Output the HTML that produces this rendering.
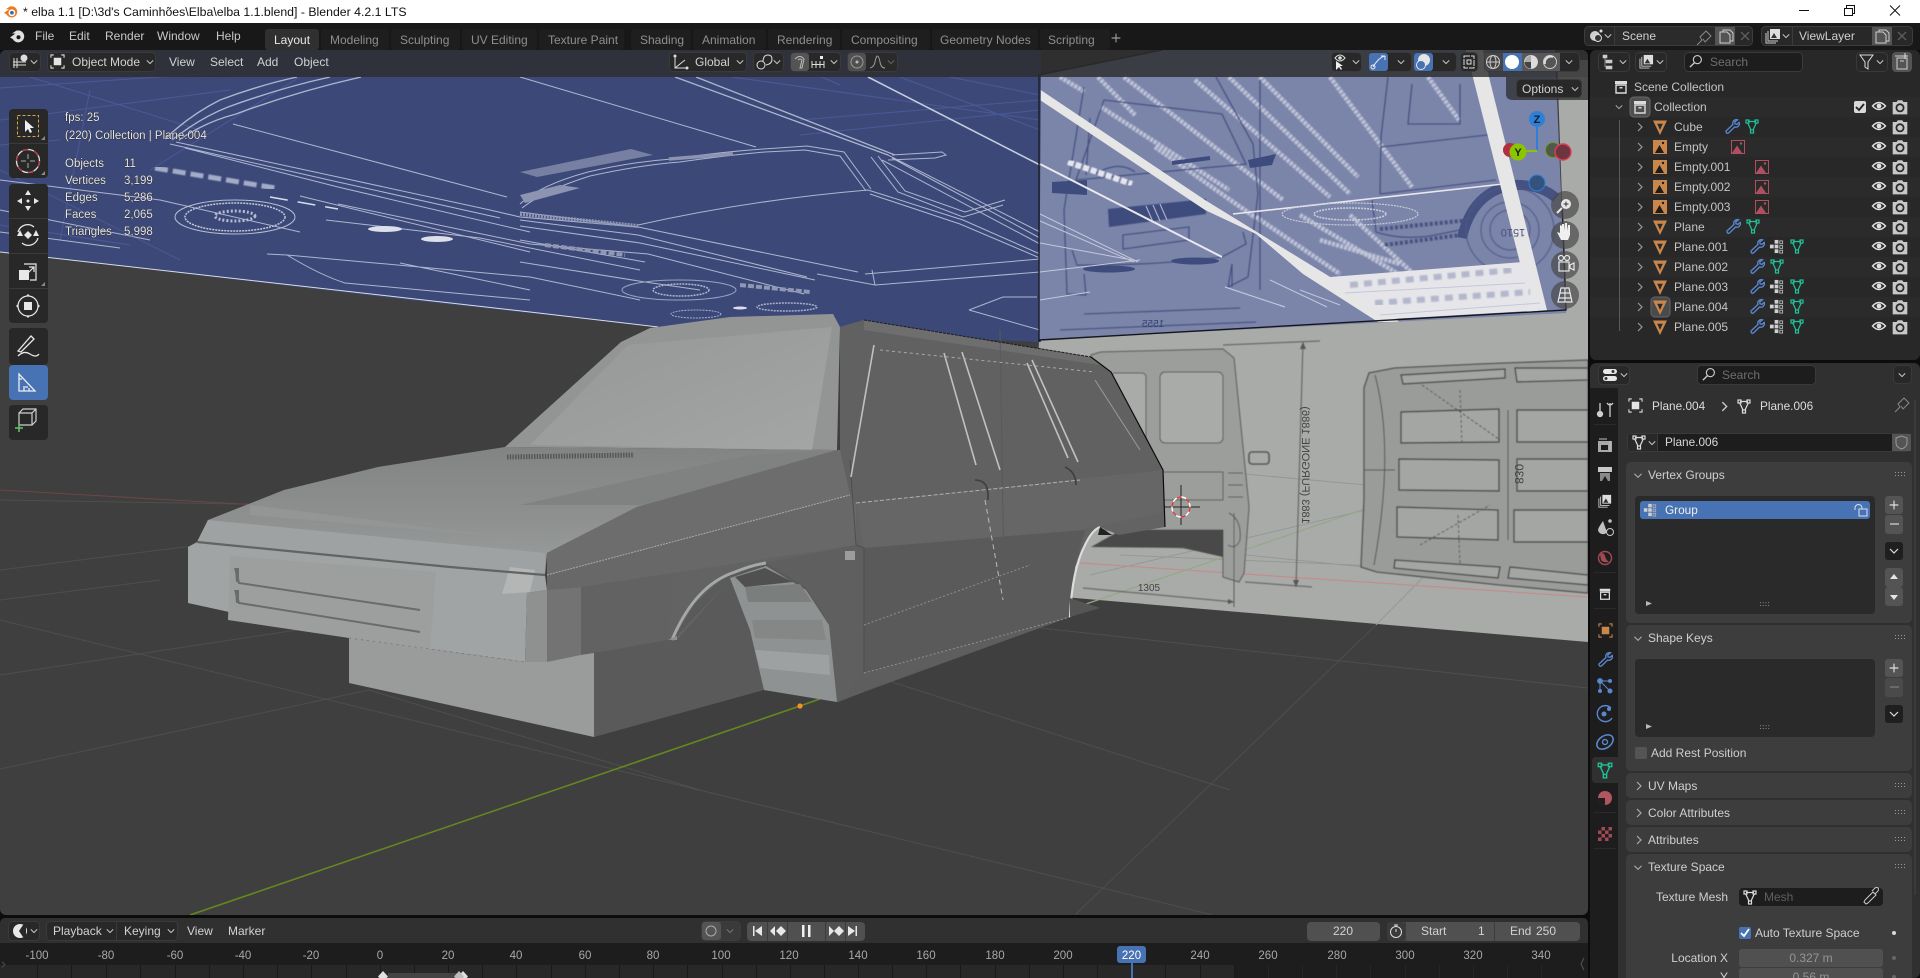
<!DOCTYPE html>
<html><head><meta charset="utf-8"><title>elba 1.1 - Blender</title>
<style>
html,body{margin:0;padding:0;background:#000;width:1920px;height:978px;overflow:hidden}
svg{display:block}
text{font-family:"Liberation Sans",sans-serif;font-size:12px;fill:#d0d0d0;white-space:pre}
.m{fill:#c8c8c8}.tb{fill:#8f8f8f}.h{fill:#d2d2d2}
.st{fill:#e8e8e8;font-size:11.5px;paint-order:stroke;stroke:#1a1a1a;stroke-width:.6px}
.ol{fill:#c4c4c4}.r{text-anchor:end}.c{text-anchor:middle}
.p{fill:#cfcfcf}.d{fill:#6e6e6e}.rl{fill:#a8a8a8;font-size:11.5px;text-anchor:middle}
.btn{fill:#282828;stroke:#3a3a3a}
</style></head><body>
<svg width="1920" height="978" viewBox="0 0 1920 978" xmlns="http://www.w3.org/2000/svg">
<defs>
<clipPath id="vp"><rect x="0" y="50" width="1588" height="865" rx="6"/></clipPath>
<clipPath id="lightclip"><path d="M1041 75L1162 50H1555L1566 313L1039 340Z"/></clipPath>
<filter id="b3" x="-5%" y="-5%" width="110%" height="110%"><feGaussianBlur stdDeviation=".4"/></filter>
<filter id="b6" x="-5%" y="-5%" width="110%" height="110%"><feGaussianBlur stdDeviation=".8"/></filter>
<symbol id="tri" viewBox="0 0 16 16"><g fill="none" stroke="currentColor" stroke-width="1.2"><path d="M4 3.5h8M3.5 4.5l3.6 7.7M12.5 4.5l-3.6 7.7"/><rect x="2" y="2" width="3" height="3"/><rect x="11" y="2" width="3" height="3"/><rect x="6.5" y="12" width="3" height="3"/></g></symbol>
<symbol id="wr" viewBox="0 0 16 16"><path d="M13.6 1.8a3.6 3.6 0 0 0-4.6 4.6L2.4 12.6a1.6 1.6 0 0 0 2.2 2.3L10.6 9a3.6 3.6 0 0 0 4.6-4.6L13 6.4 11 5.8l-.2-1.9z" fill="none" stroke="currentColor" stroke-width="1.3"/></symbol>
<symbol id="obj" viewBox="0 0 16 16"><path d="M1 1.500h14L8 16z" fill="#c9874c"/><path d="M5.200 4.800h5.600L8 11z" fill="#2a2a2a"/></symbol>
<symbol id="emp" viewBox="0 0 16 16"><rect x="1" y="1" width="14" height="14" fill="#c9874c"/><path d="M3 14L7.500 6l4.500 8z" fill="#1c1c1c"/><circle cx="11" cy="4" r="1.200" fill="#1c1c1c"/></symbol>
<symbol id="img" viewBox="0 0 16 16"><rect x="1.500" y="1.500" width="13" height="13" fill="#2a2a2a" stroke="#b0505e"/><path d="M2 14l5-7.500 5 7.500z" fill="#b0505e"/><circle cx="11" cy="4.500" r="1.200" fill="#b0505e"/></symbol>
<symbol id="vg" viewBox="0 0 16 16"><g fill="#d0d0d0"><rect x="1" y="6" width="4" height="4"/><rect x="6" y="1" width="4" height="4"/><rect x="6" y="6" width="4" height="4"/><rect x="6" y="11" width="4" height="4"/></g><g fill="none" stroke="#b0b0b0"><rect x="11.500" y="2" width="3" height="3"/><rect x="11.500" y="7" width="3" height="3"/><rect x="11.500" y="12" width="3" height="3"/></g></symbol>
<symbol id="eye" viewBox="0 0 16 16"><path d="M1.500 8Q8 1 14.500 8Q8 15 1.500 8z" fill="none" stroke="#e0e0e0" stroke-width="1.400"/><circle cx="8" cy="8" r="2.400" fill="#e0e0e0"/></symbol>
<symbol id="cam" viewBox="0 0 16 16"><path d="M1.500 3.500h3.500l1-1.500h4l1 1.500h3.500v11h-13z" fill="#c8c8c8"/><circle cx="8" cy="8.700" r="4" fill="#2a2a2a"/><circle cx="8" cy="8.700" r="2.400" fill="#c8c8c8"/></symbol>
<symbol id="chr" viewBox="0 0 10 10"><path d="M3 1l4 4-4 4" fill="none" stroke="currentColor" stroke-width="1.200"/></symbol>
<symbol id="chd" viewBox="0 0 10 10"><path d="M1 3l4 4 4-4" fill="none" stroke="currentColor" stroke-width="1.200"/></symbol>
<symbol id="col" viewBox="0 0 16 16"><rect x="2" y="2" width="12" height="3" fill="#dcdcdc"/><path d="M3 6h10v8H3z" fill="none" stroke="#dcdcdc" stroke-width="1.400"/><rect x="6.500" y="8" width="3" height="1.500" fill="#dcdcdc"/></symbol>
<symbol id="selo" viewBox="0 0 16 16"><path d="M1 4V1h3M12 1h3v3M15 12v3h-3M4 15H1v-3" fill="none" stroke="currentColor" stroke-width="1.100"/><rect x="4" y="4" width="8" height="8" fill="currentColor"/></symbol>
<symbol id="lay" viewBox="0 0 16 16"><path d="M1 5v10h10" fill="none" stroke="#ccc"/><path d="M3 3v10h10" fill="none" stroke="#ccc"/><rect x="5" y="1" width="10" height="10" fill="#ddd"/><path d="M6 10l3-5 3 5z" fill="#333"/></symbol>
<symbol id="plus" viewBox="0 0 16 16"><path d="M3 8h10M8 3v10" stroke="currentColor" stroke-width="1.300"/></symbol>
<symbol id="logo" viewBox="0 0 16 16"><path d="M1 9.500L6.500 5.500H3L7.500 2.500H10.500A6 6 0 1 1 3.800 11Z" fill="currentColor"/><circle cx="9.500" cy="9.300" r="3.600" fill="var(--h,#fff)"/><circle cx="9.500" cy="9.300" r="2" fill="var(--i,#333)"/></symbol>
<symbol id="srch" viewBox="0 0 16 16"><circle cx="10" cy="6" r="4.300" fill="none" stroke="currentColor" stroke-width="1.200"/><path d="M7 9.200L2 14" stroke="currentColor" stroke-width="1.400"/></symbol>
<symbol id="dots" viewBox="0 0 12 6"><g fill="#9a9a9a"><rect x="0" y="0" width="1" height="1"/><rect x="3" y="0" width="1" height="1"/><rect x="6" y="0" width="1" height="1"/><rect x="9" y="0" width="1" height="1"/><rect x="0" y="3" width="1" height="1"/><rect x="3" y="3" width="1" height="1"/><rect x="6" y="3" width="1" height="1"/><rect x="9" y="3" width="1" height="1"/></g></symbol>
<linearGradient id="hood" x1="0" y1="0" x2="0" y2="1"><stop offset="0" stop-color="#828484"/><stop offset=".55" stop-color="#8e9090"/><stop offset="1" stop-color="#9b9e9e"/></linearGradient>
<linearGradient id="ws" x1="0" y1="0" x2="1" y2="1"><stop offset="0" stop-color="#959797"/><stop offset="1" stop-color="#a4a6a6"/></linearGradient>
</defs>

<!-- base -->
<rect width="1920" height="978" fill="#0c0c0c"/>
<rect width="1920" height="23" fill="#fff"/>
<rect y="23" width="1920" height="27" fill="#181818"/>

<!-- VIEWPORT -->
<g clip-path="url(#vp)">
<rect y="50" width="1588" height="865" fill="#3f3f3f"/>
<g stroke="#4e4e4e" fill="none">
<path d="M0 675L297 630M0 620L1213 915M0 769L369 690M369 690L700 790M0 500L300 505M1376 625L1075 915M1040 628L1588 688M892 682L1230 790M0 570L200 545M0 600L160 580"/>
</g>
<path d="M190 915L800 706L1083 605" stroke="#64881f" stroke-width="1.600" fill="none"/>
<path d="M0 490L260 505" stroke="#6e4545" fill="none"/>

<!-- gray plane -->
<path d="M1039 340L1566 310L1557 60H1588V642L1075 598L1030 590Z" fill="#a9aba8"/>
<g stroke="#969896" fill="none"><path d="M1100 540L1588 590M1090 575L1450 490M1200 470L1588 505M1120 555L1588 575M1376 625L1455 545"/></g>
<path d="M1080 563L1588 597" stroke="#c48d8d" stroke-width="1.200"/>
<path d="M1083 605L1400 497" stroke="#95a885" stroke-width="1.200"/>
<!-- rear van -->
<g filter="url(#b3)">
<path d="M1091 355L1101 352L1223 349L1234 358L1249 507L1244 573L1239 582L1223 577L1223 530H1100Z" fill="#9c9e9c" stroke="#555"/>
<rect x="1160" y="372" width="63" height="71" rx="5" fill="#a9aba8" stroke="#555"/>
<rect x="1111" y="373" width="35" height="70" rx="4" fill="#a9aba8" stroke="#555"/>
<rect x="1249" y="452" width="20" height="12" rx="3" fill="#a9aba8" stroke="#555" stroke-width="1.600"/>
<path d="M1162 472H1223V500H1162M1228 473L1243 473M1228 485H1243M1228 497H1243" fill="none" stroke="#555"/>
<path d="M1091 547L1121 530H1223V557L1183 548Z" fill="#4a4a4a"/>
<path d="M1229 513Q1242 520 1240 540Q1236 550 1228 545" fill="none" stroke="#555"/>
<g fill="none" stroke="#5a5a5a"><path d="M1303 342L1296 587M1223 345L1320 341M1245 582L1312 587M1083 588L1234 602M1234 513V607"/></g>
<path d="M1303 342l-3 7h6zM1296 587l-3-7h6zM1234 602l-6-3v5z" fill="#555"/>
</g>
<text transform="translate(1302,465) rotate(-90) scale(1,-1)" text-anchor="middle" style="font-size:11px;fill:#444">1883 (FURGONE 1886)</text>
<text x="1149" y="591" text-anchor="middle" style="font-size:10px;fill:#444">1305</text>
<!-- underside -->
<g filter="url(#b3)">
<path d="M1364 388L1369 373L1395 368L1480 364L1588 360V593L1500 585L1377 572L1361 567L1364 500Z" fill="#9a9c9a" stroke="#505050" stroke-width="1.300"/>
<path d="M1375 375Q1395 450 1374 565M1364 470H1395" fill="none" stroke="#505050"/>
<g fill="#a4a6a4" stroke="#4c4c4c" stroke-width="1.400">
<path d="M1401 412L1499 409V442L1401 443Z"/><path d="M1399 459L1499 460V491L1399 490Z"/><path d="M1397 507L1498 510V540L1397 537Z"/>
<path d="M1517 410H1588V442H1517Z"/><path d="M1517 459H1588V491H1517Z"/><path d="M1514 510H1588V542H1514Z"/>
<path d="M1401 375L1505 369V378L1403 384Z"/><path d="M1515 368H1588V380L1517 382Z"/><path d="M1395 560L1500 567L1498 578L1394 568Z"/><path d="M1510 567L1588 575V585L1508 578Z"/>
</g>
<path d="M1508 410V540" stroke="#4c4c4c"/>
<g stroke="#555" stroke-dasharray="3 2" fill="none"><path d="M1460 390L1462 445M1458 515L1460 565M1422 385L1500 440M1420 545L1490 505"/></g>
</g>
<text transform="translate(1515,474) rotate(-90) scale(1,-1)" text-anchor="middle" style="font-size:12px;fill:#444">830</text>

<!-- 3D cursor -->
<path d="M1181 485V525M1162 507H1200" stroke="#222" stroke-width="1" fill="none"/>
<ellipse cx="1181" cy="507" rx="9" ry="10" fill="none" stroke="#fff" stroke-width="1.400"/>
<ellipse cx="1181" cy="507" rx="9" ry="10" fill="none" stroke="#d33" stroke-width="1.400" stroke-dasharray="5 5"/>

<!-- blue plane -->
<path d="M0 50H1041V342L659 327L409 300L0 252Z" fill="#3c4978"/>
<path d="M0 252L530 312L658 327" stroke="#d8dce8" stroke-width="1" fill="none"/>
<g stroke="#4a5996" fill="none" stroke-width="1"><path d="M0 88L230 72M732 77L1040 120M800 120L1040 100M900 77L1040 130M950 77L1040 95M0 120L230 90M300 77L150 170M0 170L180 260M90 90L60 240M760 50L840 85M800 135L1040 110M30 77L200 130M0 145L60 140M0 225L130 245"/></g>
<g stroke="#aeb5cf" fill="none" stroke-width="1">
<path d="M165 139Q190 115 220 100Q260 85 297 77M179 140Q205 122 236 114Q295 92 361 77M172 140Q200 118 228 107Q280 88 330 77" stroke-width="1.400"/>
<path d="M176 142L338 177L490 210L520 217L638 227M170 144L338 182L500 218M185 148L338 187L530 232"/>
<path d="M338 204L530 244L648 254L804 294M300 196L530 252"/>
<path d="M233 124L507 197M520 77L756 147"/>
<path d="M675 77L888 155M696 77L895 155" stroke-width="1.300"/>
<path d="M868 77L1040 165" stroke-width="1.600" stroke="#c6cbdc"/>
<path d="M520 204Q540 185 588 172Q630 162 672 159Q720 152 763 149L807 146L844 152L871 189M522 208Q545 190 590 176Q640 165 680 162Q730 155 765 152L805 150L840 156L866 191"/>
<path d="M638 225Q750 200 868 190L963 220L1040 254M870 194L960 224L1040 258"/>
<path d="M871 157L898 192L963 217L1003 205M878 156L905 191L965 212L1005 200M888 155L1040 232M892 158L1040 238M882 160L1040 244"/>
<path d="M892 155L942 152L946 155L935 158L888 160"/>
<path d="M520 212L638 227L858 272M520 220L638 235L807 277M520 226L640 243L815 280"/>
<path d="M865 274L1040 259M875 285L1040 272M817 274L875 285L872 270"/>
<path d="M520 240L645 262M520 262L645 282L700 290M0 180L160 200L300 232M0 210L150 240M0 232L120 248"/>
<path d="M326 220L480 238L640 270M267 254L287 255L530 277L640 300M287 255Q320 275 345 283L530 300M400 263L530 290"/>
<path d="M969 310L1003 297H1037M969 310L1040 330"/>
</g>
<path d="M270 197L338 209" stroke="#d8dce8" stroke-width="1.500" stroke-dasharray="18 10"/>
<ellipse cx="235" cy="217" rx="60" ry="17" fill="none" stroke="#b8bed4" stroke-width="1"/>
<ellipse cx="235" cy="217" rx="50" ry="14" fill="none" stroke="#c4c9da" stroke-width="1.500" stroke-dasharray="2 1"/>
<ellipse cx="235" cy="216" rx="20" ry="5" fill="none" stroke="#b4bad0" stroke-width="3" stroke-dasharray="2 2"/>
<ellipse cx="679" cy="290" rx="57" ry="10" fill="none" stroke="#9aa2c0"/>
<ellipse cx="681" cy="290" rx="28" ry="6" fill="none" stroke="#b0b7d0" stroke-width="1.500" stroke-dasharray="2 1"/>
<ellipse cx="787" cy="307" rx="30" ry="4" fill="none" stroke="#a8afca" stroke-width="1.500" stroke-dasharray="2 1"/>
<ellipse cx="696" cy="314" rx="25" ry="4" fill="none" stroke="#a8afca" stroke-dasharray="2 1"/>
<path d="M520 172L631 149L653 155L537 177Z" fill="#7780a2"/>
<path d="M669 159L733 154" stroke="#8c94b2" stroke-width="3.500"/>
<path d="M520 195L560 185L580 188L525 203Z" fill="#8c94b2"/>
<path d="M520 214L638 226" stroke="#8f97b5" stroke-width="4" stroke-dasharray="2 1"/>
<ellipse cx="385" cy="229" rx="17" ry="3" fill="#dde0ea"/><ellipse cx="437" cy="239" rx="16" ry="3" fill="#dde0ea"/>
<ellipse cx="740" cy="308" rx="7" ry="1.500" fill="#dde0ea"/>
<path d="M155 168L275 188" stroke="#a3abc6" stroke-width="5" stroke-dasharray="13 5" filter="url(#b3)"/>
<path d="M545 245L625 255M740 285L810 292" stroke="#8f97b5" stroke-width="4" stroke-dasharray="6 2"/>

<!-- light plane -->
<path d="M1041 75L1162 50H1555L1566 313L1039 340Z" fill="#7b84a9"/>
<g clip-path="url(#lightclip)">
<g filter="url(#b6)" stroke="#c3c8da" fill="none" stroke-width="4.500" stroke-dasharray="3 1.200">
<path d="M1060 77L1085 92M1098 77L1135 115M1124 77L1283 200M1195 80L1330 197M1229 77L1350 194M1260 77L1358 177M1330 77L1412 187M1428 77L1459 120M1101 107L1229 190M1155 147L1256 218M1256 217L1340 274M1300 215L1400 275M1350 215L1420 280M1320 240L1400 264"/>
</g>
<g filter="url(#b3)" fill="none" stroke="#3f4b7c" stroke-width="1.100">
<path d="M1216 77L1253 144L1258 194L1248 277L1228 287L1232 264M1084 87L1064 210L1067 294L1086 295L1084 274"/>
<path d="M1104 100L1222 114L1246 164L1076 180ZM1090 118L1086 175"/>
<path d="M1096 174Q1118 160 1135 172M1123 235L1189 227V240L1123 249ZM1072 250L1077 265Q1150 266 1222 257L1246 244L1243 232"/>
<path d="M1232 264V287M1260 80V290M1060 330L1256 322M1084 314L1240 308"/>
<path d="M1388 77L1381 137L1380 194M1412 84L1408 124H1460V84M1381 147L1496 134M1380 194L1496 180M1372 200L1376 232Q1400 240 1430 236L1460 230"/>
</g>
<path d="M1108 209L1206 199V214L1109 227Z" fill="#3e4b7d" filter="url(#b3)"/>
<path d="M1146 206L1153 222M1153 205L1160 221M1160 204L1167 220" stroke="#a8aec8" stroke-width="1.200"/>
<path d="M1052 182L1087 180V195L1052 193ZM1248 160L1276 154L1272 165L1250 168Z" fill="#3e4b7d"/>
<path d="M1172 163L1210 158" stroke="#3e4b7d" stroke-width="4"/>
<ellipse cx="1109" cy="269" rx="26" ry="3.500" fill="#3e4b7d"/><ellipse cx="1195" cy="261" rx="24" ry="3.500" fill="#3e4b7d"/>
<path d="M1462 238Q1472 192 1513 185Q1540 184 1556 198" fill="none" stroke="#3f4b7c" stroke-width="10" opacity=".9"/>
<g fill="none" stroke="#4d5888" filter="url(#b3)"><ellipse cx="1510" cy="230" rx="44" ry="43"/><ellipse cx="1510" cy="230" rx="29" ry="28"/><ellipse cx="1510" cy="230" rx="20" ry="20"/></g>
<path d="M1380 229L1470 220M1385 245L1460 235" stroke="#47527f" stroke-width="4" stroke-dasharray="3 2" filter="url(#b3)"/>
<path d="M1040 164L1222 257" stroke="#e8e8ee" stroke-width="2"/>
<path d="M1040 214L1138 262M1040 221L1134 262M1040 243L1132 260M1040 272L1140 260M1040 300L1090 292" stroke="#c3c8da" stroke-width="1" fill="none"/>
<path d="M966 50H981L1205 200L1327 275L1400 322L1378 322L1303 274L1256 234L1205 210L1040 100Z" fill="#e6e6e6"/>
<path d="M1466 50H1483L1489 77L1547 310L1527 312L1520 263Z" fill="#e6e6e6"/>
<path d="M1330 277L1523 262L1547 310L1391 319Z" fill="#e6e6ea"/>
<g stroke="#b3b7cb" stroke-width="6" stroke-dasharray="8 6" filter="url(#b6)"><path d="M1350 285L1512 270M1375 303L1530 292"/></g>
<path d="M1345 293L1525 283M1380 315L1540 303" stroke="#c4c8d6" stroke-width="1"/>
<path d="M1233 214L1503 184" stroke="#e8e8ee" stroke-width="1.600"/>
<ellipse cx="1350" cy="214" rx="68" ry="11" fill="none" stroke="#c8ccdc" stroke-width="1.200" stroke-dasharray="2 1"/>
<ellipse cx="1350" cy="214" rx="36" ry="6" fill="none" stroke="#c8ccdc" stroke-width="1.600" stroke-dasharray="2 1"/>
<path d="M1270 280L1327 307M1225 287L1285 307M1300 290L1340 305" stroke="#bfc4d8" stroke-width="1.200"/>
<path d="M1068 162L1132 184" stroke="#e4e6ee" stroke-width="6" stroke-dasharray="6 2" filter="url(#b3)"/>
</g>
<path d="M1039 342V75L1162 50" fill="none" stroke="#1d1d25" stroke-width="1.400"/>
<path d="M1039 340L1566 310L1562 200" fill="none" stroke="#15151a" stroke-width="1.400"/>
<text transform="translate(1153,327) scale(-1,1)" text-anchor="middle" style="font-size:10px;fill:#36426f">1555</text>
<text transform="translate(1513,221) scale(-1,-1) translate(0,-8)" text-anchor="middle" style="font-size:11px;fill:#47527f">1510</text>

<!-- CAR -->
<path d="M547 553L637 507L840 450V327L864 320L1091 357L1111 372L1163 470L1165 527L1119 535L1100 527L1091 533L1075 567L1070 617L861 692L838 702L764 690L677 640L581 655L547 662Z" fill="#636363"/>
<!-- box -->
<path d="M349 638V683L594 737V653L525 662Z" fill="#9a9c9c"/>
<path d="M594 653L668 640L677 640L730 580L750 630L764 690L594 737Z" fill="#5a5a5a"/>
<!-- windshield -->
<path d="M505 447L621 342L650 328L730 317L833 314L840 327L837 450Z" fill="#939595"/>
<path d="M530 445L628 345L832 327L812 450Z" fill="url(#ws)"/>
<!-- hood -->
<path d="M505 447L837 450L637 507L547 553L545 575L436 567L197 542L208 520L284 490L378 467Z" fill="url(#hood)"/>
<path d="M640 478L750 455L837 450L650 505L520 505Z" fill="#808282"/>
<path d="M208 520L545 553L545 575L197 542Z" fill="#9fa2a2"/>
<path d="M250 515L540 540L450 530L250 505Z" fill="#949696"/>
<!-- grille on hood -->
<path d="M507 457L634 455" stroke="#565656" stroke-width="5" stroke-dasharray="1.500 1.200"/>
<!-- front -->
<path d="M188 547L197 542L450 567L545 575L547 590L527 593L525 662L349 638L188 603Z" fill="#a1a4a4"/>
<path d="M230 556L436 572L430 650L228 620Z" fill="#9d9f9f"/>
<path d="M510 567L535 570L530 592L502 594Z" fill="#b4b6b6"/>
<path d="M527 593L547 590L547 662L525 662Z" fill="#8f9191"/>
<path d="M547 590L581 587L581 655L547 662Z" fill="#737373"/>
<path d="M581 587L673 573L668 640L581 655Z" fill="#626262"/>
<path d="M197 542L450 567L545 575" fill="none" stroke="#626464" stroke-width="2.200"/>
<path d="M235 568L239 583L420 610M235 590L239 603L420 632" fill="none" stroke="#6a6c6c" stroke-width="2"/>
<path d="M235 568l4 0v14l-3 0zM235 590l4 0v13l-3 0z" fill="#6a6c6c"/>
<path d="M349 638L525 662" stroke="#7a7a7a" stroke-dasharray="2 4"/>
<!-- fender -->
<path d="M547 553L637 507L837 450L850 450L850 495L547 575Z" fill="#6d6d6d"/>
<path d="M547 575L850 495L856 502L856 545L673 573L581 587L547 590Z" fill="#686868"/>
<path d="M547 575L850 495" stroke="#aaa" stroke-dasharray="2 1" fill="none"/>
<!-- arch -->
<path d="M673 640L695 603L730 572L766 563L806 587L829 623L837 702L764 690L730 580Z" fill="#5a5a5a"/>
<path d="M730 578L766 566L806 590L829 625L837 702L764 690L750 630Z" fill="#8f9292"/>
<path d="M735 577L765 568L793 582L745 587Z" fill="#505050"/>
<path d="M745 587L800 584L812 602L748 602Z" fill="#7c7e7e"/>
<path d="M752 620L822 620L826 640L755 638Z" fill="#858787"/>
<path d="M755 650L829 655L830 675L760 668Z" fill="#9ea1a1"/>
<path d="M672 640Q695 585 735 572Q752 565 766 563" fill="none" stroke="#a5a8a8" stroke-width="3"/>
<path d="M668 640h9v-4z" fill="#8d8f8f"/>
<!-- rear quarter -->
<path d="M766 563L856 545L864 548V692L838 702L829 623L806 587Z" fill="#5f5f5f"/>
<!-- side upper -->
<path d="M840 327L864 320L1091 357L1111 372L1163 470L856 503L850 495L840 450Z" fill="#616161"/>
<path d="M864 320L1091 357L1100 365L864 330Z" fill="#6e6e6e"/>
<path d="M856 503L1163 470L1165 512L1080 530L864 548Z" fill="#666"/>
<path d="M864 548L1085 530L1075 567L1070 617L864 692Z" fill="#5a5a5a"/>
<path d="M864 673L1070 617L861 692L838 702Z" fill="#5e5e5e"/>
<path d="M850 460L856 545L864 548V673" fill="none" stroke="#4e4e4e"/>
<path d="M1005 640L1000 330" stroke="#5a5a5a" fill="none"/>
<path d="M1091 357L1111 372L1163 470L1165 527" fill="none" stroke="#0c0c0c" stroke-width="1.200"/>
<path d="M864 320L1091 357" fill="none" stroke="#1d1d1d" stroke-dasharray="3 1" stroke-width="1"/>
<!-- pillars -->
<g fill="none" stroke="#bfc1c1" stroke-width="1.600">
<path d="M874 345L851 477M944 353L976 465M962 352L1000 470M1027 363L1068 458M1032 360L1078 462"/>
<path d="M1095 380L1140 450" stroke="#9a9a9a" stroke-width="1"/>
</g>
<path d="M880 350L1095 372" stroke="#a8a8a8" stroke-dasharray="3 3" fill="none"/>
<path d="M856 503L1080 480" stroke="#b0b0b0" stroke-dasharray="4 2" fill="none"/>
<path d="M975 480Q988 480 988 495V500M1065 467Q1076 472 1076 485" stroke="#3e3e3e" stroke-width="1.600" fill="none"/>
<path d="M985 500L1003 600" stroke="#bbb" stroke-dasharray="5 4" fill="none"/>
<rect x="845" y="551" width="10" height="9" fill="#9c9c9c"/>
<path d="M864 625L1030 565M864 673L1070 617" stroke="#8f8f8f" stroke-dasharray="2 2" fill="none"/>
<path d="M1070 617Q1072 570 1085 545Q1092 530 1100 527" fill="none" stroke="#dcdcdc" stroke-width="2.200"/>
<path d="M1100 527L1112 535L1098 535Z" fill="#222"/>
<path d="M1070 598L1100 608L1070 617Z" fill="#555"/>
<!-- origin -->
<circle cx="800" cy="706" r="2.600" fill="#f59320"/>

<!-- header overlay -->
<rect y="50" width="1588" height="27" fill="#2c2c2c" opacity=".8"/>
<path d="M1506 77H1588V100H1513Q1506 100 1506 94Z" fill="#2c2c2c" opacity=".75"/>

<!-- nav gizmo -->
<path d="M1537 119V150" stroke="#2f7fd4" stroke-width="2" fill="none"/>
<path d="M1537 151H1518" stroke="#8bc500" stroke-width="2"/>
<circle cx="1510" cy="150" r="7" fill="#b03040"/>
<circle cx="1553" cy="150" r="7.500" fill="#4f5a4a" stroke="#6f9a2a"/>
<circle cx="1563" cy="152" r="8" fill="#6e3540" stroke="#e03c50" stroke-width="1.400"/>
<circle cx="1518" cy="152" r="8.500" fill="#8bc500"/>
<text x="1518" y="156" class="c" style="font-size:11px;fill:#17220a;font-weight:bold">Y</text>
<circle cx="1537" cy="119" r="8" fill="#2f7fd4"/>
<text x="1537" y="123" class="c" style="font-size:11px;fill:#0c2035;font-weight:bold">Z</text>
<circle cx="1537" cy="183" r="8" fill="#33537e" stroke="#2f7fd4"/>
<g fill="#4a4a4a" fill-opacity=".7"><circle cx="1565" cy="205" r="14"/><circle cx="1565" cy="235" r="14"/><circle cx="1565" cy="265" r="14"/><circle cx="1565" cy="295" r="14"/></g>
<circle cx="1566" cy="204" r="5" fill="#e8e8e8"/><path d="M1563.500 204h5M1566 201.500v5" stroke="#333"/><path d="M1562 208l-5 5" stroke="#e8e8e8" stroke-width="2"/>
<path d="M1559 236l-2-4 3 1v-8l2 1 0 5 0-7 2 0 0 7 1-8 2 0 0 8 1-6 2 0 0 10-2 5h-7z" fill="#f0f0f0"/>
<g fill="none" stroke="#e8e8e8" stroke-width="1.200"><rect x="1559" y="262" width="10" height="9"/><circle cx="1561" cy="258" r="2.500"/><circle cx="1567" cy="258" r="2.500"/><path d="M1570 265l4-2v7l-4-2z"/></g>
<g fill="none" stroke="#e8e8e8" stroke-width="1.200"><path d="M1561 288h8l3 14h-14zM1565 288v14M1560 293h10M1559 298h12"/></g>
</g>

<!-- Tool shelf -->
<g>
<rect x="9" y="109" width="39" height="69" rx="4" fill="#282828"/>
<rect x="9" y="184" width="39" height="139" rx="4" fill="#282828"/>
<path d="M9 143.500H48M9 218.500H48M9 253.500H48M9 288.500H48" stroke="#3a3a3a"/>
<rect x="9" y="328" width="39" height="37" rx="4" fill="#282828"/>
<rect x="9" y="365" width="39" height="35" rx="4" fill="#4772b3"/>
<rect x="9" y="405" width="39" height="35" rx="4" fill="#282828"/>
<rect x="17.500" y="115.500" width="21" height="21" fill="none" stroke="#d4a94c" stroke-dasharray="3 2"/>
<path d="M25 120v12l3-3 2 4 2-1-2-4h4z" fill="#f0f0f0"/>
<path d="M45 140v-4l-4 4zM45 175v-4l-4 4zM45 286v-4l-4 4z" fill="#8a8a8a"/>
<circle cx="28" cy="161" r="11.500" fill="none" stroke="#e0e0e0" stroke-width="1.300"/>
<circle cx="28" cy="161" r="11.500" fill="none" stroke="#c03040" stroke-width="1.300" stroke-dasharray="6 6"/>
<path d="M28 154v5M28 163v5M21 161h5M30 161h5" stroke="#aaa"/>
<path d="M28 190l-3 5h6zM28 211l-3-5h6zM17 201l5-3v6zM39 201l-5-3v6z" fill="#e8e8e8"/><circle cx="28" cy="201" r="1.500" fill="#e8e8e8"/>
<path d="M18 232a10 10 0 0 1 16-5M38 238a10 10 0 0 1-16 5" fill="none" stroke="#e8e8e8" stroke-width="1.300"/><path d="M28 231l4 4-4 4-4-4z" fill="#e8e8e8"/><path d="M17 236l3-6 3 6zM39 236l-3-6-3 6z" fill="#e8e8e8"/>
<rect x="19" y="270" width="10" height="10" fill="#e8e8e8"/><path d="M24 264h12v16h-6M27 274l7-7M29 267h5v5" fill="none" stroke="#e8e8e8" stroke-width="1.200"/>
<circle cx="28" cy="306" r="10" fill="none" stroke="#e8e8e8" stroke-width="1.200"/><rect x="24" y="302" width="8" height="8" fill="#e8e8e8"/><path d="M28 294l-2 2h4zM28 318l-2-2h4zM16 306l2-2v4zM40 306l-2-2v4z" fill="#e8e8e8"/>
<path d="M18 351l13-15 3 3-13 13zM18 356q6-6 12-2t9 0" fill="none" stroke="#e8e8e8" stroke-width="1.300"/>
<path d="M19 391v-17l16 17zM23 387h5M19 379h3M24 391v-3M29 391v-3" fill="none" stroke="#eee" stroke-width="1.300"/>
<path d="M19 413h13v12H19zM19 413l4-4h13v12l-4 4M32 413l4-4" fill="none" stroke="#d0d0d0" stroke-width="1.200"/><path d="M15 428h8M19 424v8" stroke="#65c46a" stroke-width="1.500"/>
</g>

<!-- stats -->
<text x="65" y="121" class="st">fps: 25</text>
<text x="65" y="139" class="st">(220) Collection | Plane.004</text>
<text x="65" y="167" class="st">Objects</text><text x="124" y="167" class="st">11</text>
<text x="65" y="184" class="st">Vertices</text><text x="124" y="184" class="st">3,199</text>
<text x="65" y="201" class="st">Edges</text><text x="124" y="201" class="st">5,286</text>
<text x="65" y="218" class="st">Faces</text><text x="124" y="218" class="st">2,065</text>
<text x="65" y="235" class="st">Triangles</text><text x="124" y="235" class="st">5,998</text>

<!-- Title bar -->
<use href="#logo" x="3" y="4" width="15" height="15" style="color:#ed7a1c;--h:#fff;--i:#2a6fb8"/>
<text x="23" y="16" style="font-size:12.300px;fill:#111">* elba 1.1 [D:\3d's Caminhões\Elba\elba 1.1.blend] - Blender 4.2.1 LTS</text>
<path d="M1799 10.500H1809" stroke="#111"/>
<path d="M1844.500 8.500H1852.500V15.500H1844.500ZM1846.500 8.500V5.500H1854.500V13.500H1852.500" fill="none" stroke="#111"/>
<path d="M1890 5.500L1900 15.500M1900 5.500L1890 15.500" stroke="#111"/>

<!-- Top bar -->
<use href="#logo" x="9" y="28" width="16" height="16" style="color:#e0e0e0;--h:#e0e0e0;--i:#181818"/>
<text x="35" y="40" class="m">File</text><text x="69" y="40" class="m">Edit</text><text x="105" y="40" class="m">Render</text><text x="157" y="40" class="m">Window</text><text x="216" y="40" class="m">Help</text>
<g fill="#1e1e1e"><rect x="321" y="29" width="68" height="21" rx="3"/><rect x="391" y="29" width="69" height="21" rx="3"/><rect x="462" y="29" width="75" height="21" rx="3"/><rect x="539" y="29" width="85" height="21" rx="3"/><rect x="631" y="29" width="60" height="21" rx="3"/><rect x="693" y="29" width="73" height="21" rx="3"/><rect x="768" y="29" width="72" height="21" rx="3"/><rect x="842" y="29" width="88" height="21" rx="3"/><rect x="932" y="29" width="106" height="21" rx="3"/><rect x="1040" y="29" width="70" height="21" rx="3"/></g>
<rect x="265" y="29" width="54" height="21" rx="3" fill="#303030"/>
<text x="274" y="44" style="fill:#e6e6e6">Layout</text>
<text x="330" y="44" class="tb">Modeling</text><text x="400" y="44" class="tb">Sculpting</text><text x="471" y="44" class="tb">UV Editing</text><text x="548" y="44" class="tb">Texture Paint</text><text x="640" y="44" class="tb">Shading</text><text x="702" y="44" class="tb">Animation</text><text x="777" y="44" class="tb">Rendering</text><text x="851" y="44" class="tb">Compositing</text><text x="940" y="44" class="tb">Geometry Nodes</text><text x="1048" y="44" class="tb">Scripting</text>
<use href="#plus" x="1109" y="31" width="14" height="14" style="color:#999"/>

<!-- Scene / viewlayer -->
<rect x="1584.500" y="26.500" width="168" height="19" rx="4" fill="#282828" stroke="#3c3c3c"/>
<rect x="1615" y="27" width="100" height="18" fill="#2b2b2b"/><path d="M1614.500 27V45" stroke="#3c3c3c"/>
<rect x="1715" y="27" width="20" height="18" fill="#545454"/>
<circle cx="1595" cy="36" r="5" fill="#cfcfcf"/><circle cx="1598" cy="38" r="3.500" fill="#333" stroke="#ddd"/><circle cx="1601" cy="31" r="1.500" fill="#ddd"/>
<use href="#chd" x="1604" y="32" width="8" height="8" style="color:#ccc"/>
<text x="1622" y="40">Scene</text>
<path d="M1697 45l5-5-2-3 6-6 5 5-6 6-2-3" fill="none" stroke="#888"/>
<path d="M1720 32h7l3 3v8h-10zM1723 32v-2h7l3 3v8h-3" fill="none" stroke="#ccc"/>
<path d="M1741 32l8 8M1749 32l-8 8" stroke="#5e5e5e" stroke-width="1.300"/>
<rect x="1761.500" y="26.500" width="151" height="19" rx="4" fill="#282828" stroke="#3c3c3c"/>
<path d="M1792.500 27V45" stroke="#3c3c3c"/>
<rect x="1872" y="27" width="20" height="18" fill="#545454"/>
<use href="#lay" x="1765" y="28" width="16" height="16"/>
<use href="#chd" x="1782" y="32" width="8" height="8" style="color:#ccc"/>
<text x="1799" y="40">ViewLayer</text>
<path d="M1876 32h7l3 3v8h-10zM1879 32v-2h7l3 3v8h-3" fill="none" stroke="#ccc"/>
<path d="M1898 32l8 8M1906 32l-8 8" stroke="#5e5e5e" stroke-width="1.300"/>

<!-- Viewport header buttons -->
<rect x="9.500" y="52.500" width="31" height="19" rx="4" class="btn"/>
<path d="M14 68V58M17 58v10M13 62h13M13 65h13" stroke="#ddd" fill="none"/><circle cx="24" cy="58" r="3.500" fill="#ddd"/>
<use href="#chd" x="30" y="58" width="8" height="8" style="color:#ccc"/>
<rect x="47.500" y="52.500" width="108" height="19" rx="4" class="btn"/>
<use href="#selo" x="50" y="54" width="15" height="15" style="color:#e4e4e4"/>
<text x="72" y="66" class="h">Object Mode</text>
<use href="#chd" x="146" y="58" width="8" height="8" style="color:#ccc"/>
<text x="169" y="66" class="h">View</text><text x="210" y="66" class="h">Select</text><text x="257" y="66" class="h">Add</text><text x="294" y="66" class="h">Object</text>
<rect x="669.500" y="52.500" width="77" height="19" rx="4" class="btn"/>
<path d="M675 56v12h12M675 68l10-8" fill="none" stroke="#ddd"/><circle cx="675" cy="56" r="1.500" fill="#ddd"/><circle cx="687" cy="68" r="1.500" fill="#ddd"/>
<text x="695" y="66" class="h">Global</text><use href="#chd" x="736" y="58" width="8" height="8" style="color:#ccc"/>
<rect x="753.500" y="52.500" width="30" height="19" rx="4" class="btn"/>
<circle cx="761" cy="65" r="4" fill="none" stroke="#ddd"/><path d="M763 62q0-7 5-7 4 0 4 4 0 5-6 6" fill="none" stroke="#ddd"/>
<use href="#chd" x="773" y="58" width="8" height="8" style="color:#ccc"/>
<rect x="790.500" y="52.500" width="50" height="19" rx="4" class="btn"/><rect x="791" y="53" width="18" height="18" rx="3" fill="#545454"/>
<path d="M795 59q5-5 9 0l-2 9h-2l2-8q-2-2-4 0" fill="none" stroke="#bbb"/>
<path d="M812 61v7M816 61v7M820 61v7M824 61v7M812 64.500h12" stroke="#ddd"/><rect x="820" y="56" width="3" height="3" fill="#eee"/>
<use href="#chd" x="830" y="58" width="8" height="8" style="color:#ccc"/>
<rect x="847.500" y="52.500" width="50" height="19" rx="4" fill="#2a2a2a" stroke="#3a3a3a"/><rect x="848" y="53" width="18" height="18" rx="3" fill="#505050"/>
<circle cx="857" cy="62" r="6" fill="none" stroke="#999"/><circle cx="857" cy="62" r="1.500" fill="#bbb"/>
<path d="M870 68q4-1 5-6t2-6q2 0 3 6t5 6" fill="none" stroke="#9a9a9a"/>
<use href="#chd" x="887" y="58" width="8" height="8" style="color:#666"/>
<!-- right -->
<rect x="1331.500" y="52.500" width="30" height="19" rx="4" class="btn"/>
<path d="M1335 58q5-6 10 0q-5 6-10 0z" fill="none" stroke="#ddd"/><circle cx="1340" cy="58" r="1.800" fill="#ddd"/><path d="M1336 61v9l3-3 2 3 1-1-2-3h3z" fill="#eee"/>
<use href="#chd" x="1352" y="58" width="8" height="8" style="color:#ccc"/>
<rect x="1369.500" y="52.500" width="42" height="19" rx="4" class="btn"/><rect x="1369" y="53" width="19" height="18" rx="3" fill="#4772b3"/>
<path d="M1373 67q6-10 12-11M1385 56h-4M1385 56v4" fill="none" stroke="#eee"/><circle cx="1373" cy="67" r="2" fill="none" stroke="#eee"/>
<use href="#chd" x="1397" y="58" width="8" height="8" style="color:#ccc"/>
<rect x="1414.500" y="52.500" width="42" height="19" rx="4" class="btn"/><rect x="1414" y="53" width="19" height="18" rx="3" fill="#4772b3"/>
<circle cx="1424" cy="60" r="6" fill="#e6e6e6"/><circle cx="1421" cy="65" r="4.500" fill="#4772b3" stroke="#e6e6e6"/>
<use href="#chd" x="1442" y="58" width="8" height="8" style="color:#ccc"/>
<rect x="1460.500" y="52.500" width="17" height="19" rx="4" class="btn"/>
<rect x="1464" y="56" width="10" height="12" fill="none" stroke="#ddd" stroke-dasharray="6 1"/><rect x="1467" y="60" width="4" height="4" fill="none" stroke="#ddd"/>
<rect x="1484.500" y="52.500" width="95" height="19" rx="4" class="btn"/>
<rect x="1485" y="53" width="18" height="18" fill="#454545"/><rect x="1503" y="53" width="19" height="18" fill="#4772b3"/><rect x="1522" y="53" width="19" height="18" fill="#585858"/><rect x="1541" y="53" width="19" height="18" fill="#585858"/>
<circle cx="1493" cy="62" r="6.500" fill="none" stroke="#ccc"/><ellipse cx="1493" cy="62" rx="3" ry="6.500" fill="none" stroke="#ccc"/><path d="M1486.500 62h13" stroke="#ccc"/>
<circle cx="1512" cy="62" r="7" fill="#fff"/>
<circle cx="1531" cy="62" r="6.500" fill="#aaa" stroke="#ccc"/><path d="M1531 55.500v13a6.500 6.500 0 0 0 0-13z" fill="#ddd"/><path d="M1524.500 62a6.500 6.500 0 0 0 6.500 6.500v-6.500z" fill="#444"/>
<circle cx="1550" cy="62" r="6.500" fill="#555" stroke="#ccc"/><path d="M1545 64a6 6 0 0 1 8-7" fill="none" stroke="#ddd" stroke-width="2"/>
<use href="#chd" x="1565" y="58" width="8" height="8" style="color:#ccc"/>
<rect x="1516.500" y="79.500" width="65" height="18" rx="4" fill="#282828" stroke="#3a3a3a"/>
<text x="1522" y="93" class="h">Options</text><use href="#chd" x="1571" y="85" width="8" height="8" style="color:#ccc"/>

<!-- OUTLINER -->
<rect x="1590" y="50" width="330" height="310" rx="6" fill="#282828"/>
<g fill="#2b2b2b"><rect x="1590" y="97" width="330" height="20"/><rect x="1590" y="137" width="330" height="20"/><rect x="1590" y="177" width="330" height="20"/><rect x="1590" y="217" width="330" height="20"/><rect x="1590" y="257" width="330" height="20"/><rect x="1590" y="297" width="330" height="20"/></g>
<rect x="1598.500" y="52.500" width="31" height="19" rx="4" class="btn"/>
<path d="M1603 55h4v3h-4zM1606 60h6v3h-6zM1606 66h6v3h-6zM1605 58v9" fill="#ccc" stroke="#ccc" stroke-width=".6"/>
<use href="#chd" x="1619" y="58" width="8" height="8" style="color:#ccc"/>
<rect x="1635.500" y="52.500" width="31" height="19" rx="4" class="btn"/>
<use href="#lay" x="1639" y="54" width="15" height="15"/><use href="#chd" x="1656" y="58" width="8" height="8" style="color:#ccc"/>
<rect x="1684.500" y="52.500" width="118" height="19" rx="4" fill="#1d1d1d" stroke="#3a3a3a"/>
<use href="#srch" x="1688" y="54" width="15" height="15" style="color:#ccc"/>
<text x="1710" y="66" class="d">Search</text>
<rect x="1856.500" y="52.500" width="31" height="19" rx="4" class="btn"/>
<path d="M1860 55h13l-5 7v7l-3-2v-5z" fill="none" stroke="#ddd"/><use href="#chd" x="1876" y="58" width="8" height="8" style="color:#ccc"/>
<rect x="1892" y="52" width="20" height="20" rx="4" fill="#545454"/>
<path d="M1897 58h10v11h-10zM1895 56h8M1900 61h4" fill="none" stroke="#ccc"/><path d="M1905 53v6M1902 56h6" stroke="#ddd"/>

<use href="#col" x="1613" y="79" width="16" height="16"/>
<text x="1634" y="91" class="ol">Scene Collection</text>
<rect x="1630" y="97" width="20" height="20" rx="4" fill="#4f4f4f" stroke="#6a6a6a"/>
<use href="#col" x="1632" y="99" width="16" height="16"/>
<use href="#chd" x="1614" y="103" width="10" height="8" style="color:#aaa"/>
<text x="1654" y="111" class="ol">Collection</text>
<rect x="1854" y="101" width="12" height="12" rx="2" fill="#d8d8d8"/><path d="M1856 107l3 3 5-6" fill="none" stroke="#222" stroke-width="1.800"/>
<path d="M1619.500 120V331" stroke="#5a5a5a"/>

<g style="color:#9a9a9a">
<use href="#chr" x="1635" y="122" width="10" height="10"/><use href="#chr" x="1635" y="142" width="10" height="10"/><use href="#chr" x="1635" y="162" width="10" height="10"/><use href="#chr" x="1635" y="182" width="10" height="10"/><use href="#chr" x="1635" y="202" width="10" height="10"/><use href="#chr" x="1635" y="222" width="10" height="10"/><use href="#chr" x="1635" y="242" width="10" height="10"/><use href="#chr" x="1635" y="262" width="10" height="10"/><use href="#chr" x="1635" y="282" width="10" height="10"/><use href="#chr" x="1635" y="302" width="10" height="10"/><use href="#chr" x="1635" y="322" width="10" height="10"/>
</g>
<rect x="1651" y="297" width="19" height="20" rx="4" fill="#4a4a4a" stroke="#666"/>
<use href="#obj" x="1652" y="119" width="16" height="16"/>
<use href="#emp" x="1652" y="139" width="16" height="16"/><use href="#emp" x="1652" y="159" width="16" height="16"/><use href="#emp" x="1652" y="179" width="16" height="16"/><use href="#emp" x="1652" y="199" width="16" height="16"/>
<use href="#obj" x="1652" y="219" width="16" height="16"/><use href="#obj" x="1652" y="239" width="16" height="16"/><use href="#obj" x="1652" y="259" width="16" height="16"/><use href="#obj" x="1652" y="279" width="16" height="16"/><use href="#obj" x="1652" y="299" width="16" height="16"/><use href="#obj" x="1652" y="319" width="16" height="16"/>
<g class="ol"><text x="1674" y="131" class="ol">Cube</text><text x="1674" y="151" class="ol">Empty</text><text x="1674" y="171" class="ol">Empty.001</text><text x="1674" y="191" class="ol">Empty.002</text><text x="1674" y="211" class="ol">Empty.003</text><text x="1674" y="231" class="ol">Plane</text><text x="1674" y="251" class="ol">Plane.001</text><text x="1674" y="271" class="ol">Plane.002</text><text x="1674" y="291" class="ol">Plane.003</text><text x="1674" y="311" class="ol">Plane.004</text><text x="1674" y="331" class="ol">Plane.005</text></g>
<g style="color:#5a87d0">
<use href="#wr" x="1724" y="118" width="16" height="16"/><use href="#wr" x="1725" y="218" width="16" height="16"/><use href="#wr" x="1749" y="238" width="16" height="16"/><use href="#wr" x="1749" y="258" width="16" height="16"/><use href="#wr" x="1749" y="278" width="16" height="16"/><use href="#wr" x="1749" y="298" width="16" height="16"/><use href="#wr" x="1749" y="318" width="16" height="16"/>
</g>
<g style="color:#1fc39a">
<use href="#tri" x="1744" y="118" width="16" height="16"/><use href="#tri" x="1745" y="218" width="16" height="16"/><use href="#tri" x="1789" y="238" width="16" height="16"/><use href="#tri" x="1769" y="258" width="16" height="16"/><use href="#tri" x="1789" y="278" width="16" height="16"/><use href="#tri" x="1789" y="298" width="16" height="16"/><use href="#tri" x="1789" y="318" width="16" height="16"/>
</g>
<use href="#vg" x="1769" y="239" width="15" height="15"/><use href="#vg" x="1769" y="279" width="15" height="15"/><use href="#vg" x="1769" y="299" width="15" height="15"/><use href="#vg" x="1769" y="319" width="15" height="15"/>
<use href="#img" x="1730" y="139" width="16" height="16"/><use href="#img" x="1754" y="159" width="16" height="16"/><use href="#img" x="1754" y="179" width="16" height="16"/><use href="#img" x="1754" y="199" width="16" height="16"/>
<g>
<use href="#eye" x="1871" y="98" width="16" height="16"/><use href="#cam" x="1891" y="98" width="18" height="18"/>
<use href="#eye" x="1871" y="118" width="16" height="16"/><use href="#cam" x="1891" y="118" width="18" height="18"/>
<use href="#eye" x="1871" y="138" width="16" height="16"/><use href="#cam" x="1891" y="138" width="18" height="18"/>
<use href="#eye" x="1871" y="158" width="16" height="16"/><use href="#cam" x="1891" y="158" width="18" height="18"/>
<use href="#eye" x="1871" y="178" width="16" height="16"/><use href="#cam" x="1891" y="178" width="18" height="18"/>
<use href="#eye" x="1871" y="198" width="16" height="16"/><use href="#cam" x="1891" y="198" width="18" height="18"/>
<use href="#eye" x="1871" y="218" width="16" height="16"/><use href="#cam" x="1891" y="218" width="18" height="18"/>
<use href="#eye" x="1871" y="238" width="16" height="16"/><use href="#cam" x="1891" y="238" width="18" height="18"/>
<use href="#eye" x="1871" y="258" width="16" height="16"/><use href="#cam" x="1891" y="258" width="18" height="18"/>
<use href="#eye" x="1871" y="278" width="16" height="16"/><use href="#cam" x="1891" y="278" width="18" height="18"/>
<use href="#eye" x="1871" y="298" width="16" height="16"/><use href="#cam" x="1891" y="298" width="18" height="18"/>
<use href="#eye" x="1871" y="318" width="16" height="16"/><use href="#cam" x="1891" y="318" width="18" height="18"/>
</g>

<!-- PROPERTIES -->
<rect x="1590" y="363" width="330" height="615" rx="6" fill="#303030"/>
<rect x="1590" y="388" width="28" height="590" fill="#1d1d1d"/>
<rect x="1598.500" y="365.500" width="31" height="19" rx="4" class="btn"/>
<rect x="1603" y="369" width="14" height="5" rx="2.500" fill="#e8e8e8"/><rect x="1603" y="376" width="14" height="5" rx="2.500" fill="#e8e8e8"/><circle cx="1613" cy="371.500" r="1.500" fill="#333"/><circle cx="1606" cy="378.500" r="1.500" fill="#333"/>
<use href="#chd" x="1620" y="371" width="8" height="8" style="color:#ccc"/>
<rect x="1697.500" y="365.500" width="118" height="19" rx="4" fill="#1d1d1d" stroke="#3a3a3a"/>
<use href="#srch" x="1701" y="367" width="15" height="15" style="color:#ccc"/>
<text x="1722" y="379" class="d">Search</text>
<rect x="1893.500" y="365.500" width="18" height="18" rx="4" fill="#282828" stroke="#3a3a3a"/>
<use href="#chd" x="1898" y="371" width="8" height="8" style="color:#ccc"/>

<!-- tabs -->
<g fill="none" stroke="#d0d0d0" stroke-width="1.300">
<path d="M1600 403v8M1610 403v6M1607 403q3 4 6 0M1610 409v8"/><circle cx="1600" cy="414" r="2.500" fill="#d0d0d0"/>
</g>
<rect x="1598" y="441" width="14" height="11" fill="#a8a8a8"/><rect x="1601" y="445" width="7" height="5" fill="#1d1d1d"/><path d="M1599 439h8M1610 441v11" stroke="#c0c0c0"/>
<rect x="1598" y="467" width="14" height="5" fill="#c8c8c8"/><rect x="1600" y="473" width="10" height="8" fill="#8a8a8a"/><path d="M1602 481l3-5 3 5z" fill="#1d1d1d"/>
<use href="#lay" x="1598" y="494" width="14" height="14"/>
<path d="M1603 521q-5 7-5 9a5 5 0 0 0 9 2q-2-5-4-11z" fill="#c0c0c0"/><circle cx="1610" cy="532" r="3.500" fill="#1d1d1d" stroke="#c8c8c8"/><circle cx="1610" cy="521" r="1.800" fill="#c0c0c0"/>
<circle cx="1605" cy="558" r="6.500" fill="#1d1d1d" stroke="#a04a55" stroke-width="1.400"/><path d="M1600 554q4-2 5 2t4 6q-6 1-8-2z" fill="#a04a55"/>
<use href="#col" x="1598" y="587" width="14" height="14"/>
<use href="#selo" x="1598" y="623" width="15" height="15" style="color:#c9874c"/>
<use href="#wr" x="1597" y="651" width="16" height="16" style="color:#5a87d0"/>
<g fill="#5a87d0" stroke="#5a87d0"><circle cx="1600" cy="681" r="2.400"/><circle cx="1610" cy="691" r="2"/><circle cx="1600" cy="691" r="1.500"/><circle cx="1610" cy="681" r="1.500"/><path d="M1600 681h10M1600 681l10 10M1600 681v10" fill="none"/></g>
<circle cx="1604" cy="714" r="2.500" fill="#5a87d0"/><path d="M1611 708a8 8 0 1 0 1 10" fill="none" stroke="#5a87d0" stroke-width="1.400"/><circle cx="1609" cy="709" r="2" fill="#5a87d0"/>
<g transform="rotate(-35 1605 742)"><ellipse cx="1605" cy="742" rx="9" ry="6" fill="none" stroke="#5a87d0" stroke-width="1.600"/><circle cx="1605" cy="742" r="2.500" fill="none" stroke="#5a87d0" stroke-width="1.400"/></g>
<path d="M1592 760a4 4 0 0 1 4-3h22v26h-22a4 4 0 0 1-4-3z" fill="#303030"/>
<use href="#tri" x="1596" y="761" width="18" height="18" style="color:#1fc39a"/>
<circle cx="1605" cy="798" r="7" fill="#b0565f"/><path d="M1598 798a7 7 0 0 0 7 7v-7z" fill="#1d1d1d"/><path d="M1605 798h7a7 7 0 0 1-7 7z" fill="#e4c0c4" opacity="0"/>
<rect x="1598" y="827" width="14" height="14" fill="#a04a55"/><g fill="#1d1d1d"><rect x="1598" y="827" width="3.500" height="3.500"/><rect x="1605" y="827" width="3.500" height="3.500"/><rect x="1601.500" y="830.500" width="3.500" height="3.500"/><rect x="1608.500" y="830.500" width="3.500" height="3.500"/><rect x="1598" y="834" width="3.500" height="3.500"/><rect x="1605" y="834" width="3.500" height="3.500"/><rect x="1601.500" y="837.500" width="3.500" height="3.500"/><rect x="1608.500" y="837.500" width="3.500" height="3.500"/></g>
<path d="M1594 424.500h22M1594 572.500h22M1594 608.500h22M1594 812.500h22M1594 848.500h22" stroke="#2a2a2a"/>

<!-- breadcrumb -->
<use href="#selo" x="1628" y="398" width="15" height="15" style="color:#e4e4e4"/>
<text x="1652" y="410" style="font-size:11.800px;fill:#dcdcdc">Plane.004</text>
<use href="#chr" x="1719" y="401" width="11" height="11" style="color:#ccc"/>
<use href="#tri" x="1736" y="398" width="16" height="16" style="color:#ddd"/>
<text x="1760" y="410" style="font-size:11.800px;fill:#dcdcdc">Plane.006</text>
<path d="M1895 412l5-5-2-3 6-6 5 5-6 6-2-3" fill="none" stroke="#888"/>

<!-- data name -->
<rect x="1627.500" y="433.500" width="283" height="18" rx="4" fill="#1d1d1d" stroke="#3a3a3a"/>
<rect x="1628" y="434" width="30" height="17" rx="3" fill="#282828"/><path d="M1657.500 434V451" stroke="#3a3a3a"/>
<use href="#tri" x="1631" y="434" width="16" height="16" style="color:#ddd"/><use href="#chd" x="1648" y="439" width="8" height="8" style="color:#ccc"/>
<text x="1665" y="446" style="font-size:11.800px;fill:#d8d8d8">Plane.006</text>
<rect x="1892" y="434" width="19" height="17" fill="#545454"/><path d="M1896 438l5.500-2 5.500 2v5q0 4-5.500 6-5.500-2-5.500-6z" fill="none" stroke="#9a9a9a"/>

<!-- Panels -->
<rect x="1626" y="462" width="286" height="161" rx="5" fill="#3d3d3d"/>
<rect x="1626" y="625" width="286" height="146" rx="5" fill="#3d3d3d"/>
<rect x="1626" y="773" width="286" height="25" rx="5" fill="#3d3d3d"/>
<rect x="1626" y="800" width="286" height="25" rx="5" fill="#3d3d3d"/>
<rect x="1626" y="827" width="286" height="25" rx="5" fill="#3d3d3d"/>
<rect x="1626" y="854" width="286" height="130" rx="5" fill="#3d3d3d"/>
<g style="color:#aaa">
<use href="#chd" x="1633" y="471" width="10" height="9"/><use href="#chd" x="1633" y="634" width="10" height="9"/><use href="#chd" x="1633" y="863" width="10" height="9"/>
<use href="#chr" x="1634" y="781" width="10" height="10"/><use href="#chr" x="1634" y="808" width="10" height="10"/><use href="#chr" x="1634" y="835" width="10" height="10"/>
</g>
<g class="p"><text x="1648" y="479" class="p">Vertex Groups</text><text x="1648" y="642" class="p">Shape Keys</text><text x="1648" y="790" class="p">UV Maps</text><text x="1648" y="817" class="p">Color Attributes</text><text x="1648" y="844" class="p">Attributes</text><text x="1648" y="871" class="p">Texture Space</text></g>
<use href="#dots" x="1895" y="472" width="12" height="6"/><use href="#dots" x="1895" y="635" width="12" height="6"/><use href="#dots" x="1895" y="783" width="12" height="6"/><use href="#dots" x="1895" y="810" width="12" height="6"/><use href="#dots" x="1895" y="837" width="12" height="6"/><use href="#dots" x="1895" y="864" width="12" height="6"/>

<rect x="1635" y="496" width="240" height="118" rx="4" fill="#2a2a2a"/>
<rect x="1640" y="501" width="230" height="18" rx="3" fill="#4772b3"/>
<use href="#vg" x="1643" y="503" width="14" height="14"/>
<text x="1665" y="514" style="font-size:11.800px;fill:#f0f0f0">Group</text>
<path d="M1855 510v-2a3.500 3.500 0 0 1 7 0v1" fill="none" stroke="#d8e0f0"/><rect x="1859" y="509" width="8" height="7" fill="none" stroke="#d8e0f0"/>
<path d="M1646 601v5l6-2.500z" fill="#b8b8b8"/>
<use href="#dots" x="1760" y="602" width="11" height="6"/>
<rect x="1885" y="496" width="18" height="18" fill="#545454" rx="3"/><rect x="1885" y="515" width="18" height="19" fill="#545454" rx="3"/>
<use href="#plus" x="1887" y="498" width="14" height="14" style="color:#e0e0e0"/><path d="M1890 524h9" stroke="#d0d0d0" stroke-width="1.300"/>
<rect x="1885" y="542" width="18" height="18" rx="3" fill="#1f1f1f"/><use href="#chd" x="1889" y="546" width="10" height="10" style="color:#ddd"/>
<rect x="1885" y="568" width="18" height="19" rx="3" fill="#545454"/><rect x="1885" y="587" width="18" height="19" rx="3" fill="#545454"/>
<path d="M1894 574l-4 5h8zM1894 600l-4-5h8z" fill="#e4e4e4"/>

<rect x="1635" y="659" width="240" height="78" rx="4" fill="#2a2a2a"/>
<path d="M1646 724v5l6-2.500z" fill="#b8b8b8"/>
<use href="#dots" x="1760" y="725" width="11" height="6"/>
<rect x="1885" y="659" width="18" height="18" rx="3" fill="#545454"/><rect x="1885" y="678" width="18" height="19" rx="3" fill="#4a4a4a"/>
<use href="#plus" x="1887" y="661" width="14" height="14" style="color:#e0e0e0"/><path d="M1890 687h9" stroke="#7c7c7c" stroke-width="1.300"/>
<rect x="1885" y="705" width="18" height="18" rx="3" fill="#1f1f1f"/><use href="#chd" x="1889" y="709" width="10" height="10" style="color:#ddd"/>
<rect x="1635" y="747" width="12" height="12" rx="2" fill="#545454"/>
<text x="1651" y="757" class="p">Add Rest Position</text>

<text x="1728" y="901" class="p r">Texture Mesh</text>
<rect x="1739" y="888" width="144" height="18" rx="4" fill="#1d1d1d"/>
<use href="#tri" x="1742" y="889" width="16" height="16" style="color:#ddd"/>
<text x="1764" y="901" style="fill:#5f5f5f">Mesh</text>
<path d="M1866 904l2-1 8-8-3-3-8 8-1 2zM1872 891l3-3q2-1 3 0t0 3l-3 3" fill="none" stroke="#ccc"/>
<rect x="1739" y="927" width="12" height="12" rx="2" fill="#4772b3"/><path d="M1741 933l3 3 5-7" fill="none" stroke="#fff" stroke-width="1.800"/>
<text x="1755" y="937" class="p">Auto Texture Space</text>
<circle cx="1894" cy="933" r="2" fill="#d8d8d8"/>
<text x="1728" y="962" class="p r">Location X</text>
<rect x="1739" y="949" width="144" height="18" rx="3" fill="#505050"/><rect x="1739" y="968" width="144" height="20" rx="3" fill="#505050"/>
<text x="1811" y="962" class="c" style="fill:#959595">0.327 m</text>
<text x="1811" y="981" class="c" style="fill:#959595">0.56 m</text>
<text x="1728" y="981" class="p r">Y</text>
<circle cx="1894" cy="958" r="2" fill="#666"/><circle cx="1894" cy="977" r="2" fill="#666"/>
<rect x="1914" y="400" width="2" height="495" fill="#3a3a3a"/>

<!-- TIMELINE -->
<rect y="918" width="1588" height="60" rx="5" fill="#303030"/>
<rect y="943" width="1588" height="35" fill="#1d1d1d"/>
<rect x="0" y="965" width="1235" height="13" fill="#282828"/>
<g stroke="#1a1a1a"><path d="M37.500 965V978M71.500 965V978M106.500 965V978M140.500 965V978M175.500 965V978M209.500 965V978M243.500 965V978M277.500 965V978M311.500 965V978M346.500 965V978M380.500 965V978M414.500 965V978M448.500 965V978M482.500 965V978M516.500 965V978M551.500 965V978M585.500 965V978M619.500 965V978M653.500 965V978M687.500 965V978M722.500 965V978M756.500 965V978M790.500 965V978M824.500 965V978M858.500 965V978M892.500 965V978M926.500 965V978M960.500 965V978M995.500 965V978M1029.500 965V978M1063.500 965V978M1097.500 965V978M1131.500 965V978M1165.500 965V978M1200.500 965V978M1234.500 965V978"/></g>
<g stroke="#262626"><path d="M1268.500 965V978M1302.500 965V978M1336.500 965V978M1370.500 965V978M1405.500 965V978M1439.500 965V978M1473.500 965V978M1507.500 965V978M1541.500 965V978"/></g>
<rect x="388" y="973" width="70" height="5" fill="#444"/>
<path d="M383 971l5 5.500-5 5.500-5-5.500zM463 971l5 5.500-5 5.500-5-5.500z" fill="#e0e0e0"/><path d="M459 971l5 5.500-5 5.500-5-5.500z" fill="#bbb"/>
<rect x="8.500" y="921.500" width="31" height="19" rx="4" class="btn"/>
<circle cx="20" cy="931" r="7" fill="#e8e8e8"/><path d="M23 925l-4 6 4 6 3 0V925z" fill="#282828"/>
<use href="#chd" x="30" y="927" width="8" height="8" style="color:#ccc"/>
<rect x="46.500" y="921.500" width="131" height="19" rx="4" class="btn"/><path d="M116.500 922V940" stroke="#3a3a3a"/>
<text x="53" y="935" class="h">Playback</text><use href="#chd" x="106" y="927" width="8" height="8" style="color:#ccc"/>
<text x="124" y="935" class="h">Keying</text><use href="#chd" x="167" y="927" width="8" height="8" style="color:#ccc"/>
<text x="187" y="935" class="h">View</text><text x="228" y="935" class="h">Marker</text>
<rect x="701.500" y="921.500" width="39" height="19" rx="4" fill="#3a3a3a" stroke="#3c3c3c"/><rect x="702" y="922" width="19" height="18" rx="3" fill="#545454"/>
<circle cx="711" cy="931" r="5" fill="none" stroke="#aaa"/><use href="#chd" x="726" y="927" width="8" height="8" style="color:#777"/>
<rect x="747" y="922" width="118" height="19" rx="4" fill="#505050"/>
<path d="M767.500 922V941M787.500 922V941M825.500 922V941M845.500 922V941" stroke="#3c3c3c"/>
<path d="M753 926v10h1.500v-10zM762 926l-7 5 7 5z" fill="#e8e8e8"/>
<path d="M775 926l-5 5 5 5zM781 926l5 5-5 5-5-5z" fill="#e8e8e8"/>
<path d="M802 925h2.500v12H802zM808 925h2.500v12H808z" fill="#f0f0f0"/>
<path d="M829 926l5 5-5 5zM839 926l5 5-5 5-5-5z" fill="#e8e8e8"/>
<path d="M848 926l7 5-7 5zM857 926v10h-1.500v-10z" fill="#e8e8e8"/>
<rect x="1307" y="922" width="73" height="19" rx="4" fill="#505050"/>
<text x="1343" y="935" class="c h">220</text>
<rect x="1387" y="922" width="193" height="19" rx="4" fill="#505050"/>
<rect x="1387" y="922" width="19" height="19" rx="4" fill="#3a3a3a"/>
<path d="M1405.500 922V941M1494.500 922V941" stroke="#3c3c3c"/>
<circle cx="1396" cy="932" r="5.500" fill="none" stroke="#ddd"/><path d="M1394 925h4M1396 925v2M1396 932v-3" stroke="#ddd"/>
<text x="1421" y="935" class="h">Start</text><text x="1478" y="935" class="h">1</text><text x="1510" y="935" class="h">End</text><text x="1546" y="935" class="c h">250</text>

<g class="rl">
<text x="37" y="959" class="rl">-100</text><text x="106" y="959" class="rl">-80</text><text x="175" y="959" class="rl">-60</text><text x="243" y="959" class="rl">-40</text><text x="311" y="959" class="rl">-20</text><text x="380" y="959" class="rl">0</text><text x="448" y="959" class="rl">20</text><text x="516" y="959" class="rl">40</text><text x="585" y="959" class="rl">60</text><text x="653" y="959" class="rl">80</text><text x="721" y="959" class="rl">100</text><text x="789" y="959" class="rl">120</text><text x="858" y="959" class="rl">140</text><text x="926" y="959" class="rl">160</text><text x="995" y="959" class="rl">180</text><text x="1063" y="959" class="rl">200</text><text x="1200" y="959" class="rl">240</text><text x="1268" y="959" class="rl">260</text><text x="1337" y="959" class="rl">280</text><text x="1405" y="959" class="rl">300</text><text x="1473" y="959" class="rl">320</text><text x="1541" y="959" class="rl">340</text>
</g>
<rect x="1131" y="960" width="2" height="18" fill="#4772b3"/>
<rect x="1117" y="946" width="29" height="17" rx="3" fill="#4772b3"/>
<text x="1131.500" y="959" class="c" style="font-size:11.500px;fill:#fff">220</text>
<use href="#chr" x="0" y="958" width="7" height="13" style="color:#555"/>
<path d="M1584 958l-3 6 3 6" fill="none" stroke="#555"/>
</svg>
</body></html>
